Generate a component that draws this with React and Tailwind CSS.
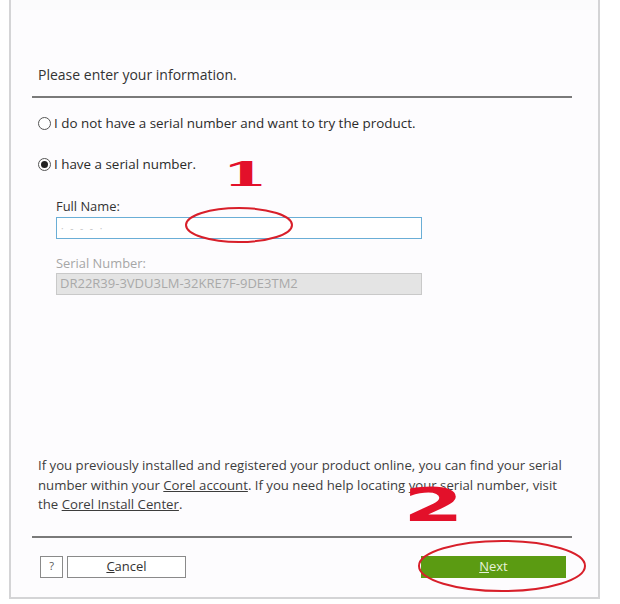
import React from 'react';

const font = { fontFamily: '"Open Sans", "Noto Sans", sans-serif' };

const Radio = ({ checked, label }) => (
  <div className="flex items-center h-[18px]">
    <span className="w-[13px] h-[13px] rounded-full border border-[#555] bg-white flex items-center justify-center">
      {checked && <span className="w-[7px] h-[7px] rounded-full bg-[#222]" />}
    </span>
    <span className="ml-[3px] text-[13.4px] text-[#2b2b2b]">{label}</span>
  </div>
);

const App = () => {
  return (
    <div className="relative w-[620px] h-[604px] bg-white overflow-hidden" style={font}>
      <div className="ml-[9px] w-[591px] h-[599px] border-x-2 border-b-2 border-[#d4d4d6] bg-[#fdfcfe] flex flex-col">
        <div className="h-[10px] bg-[#fbfbfc]" />

        {/* heading */}
        <div className="mt-[56px] ml-[27px] text-[14px] leading-[18px] text-[#333]">
          Please enter your information.
        </div>
        <div className="mt-[12px] ml-[21px] mr-[26px] h-[2px] bg-[#7a7a7a]" />

        {/* options */}
        <div className="ml-[27px] mt-[16px]">
          <Radio label="I do not have a serial number and want to try the product." />
        </div>
        <div className="ml-[27px] mt-[23px]">
          <Radio checked label="I have a serial number." />
        </div>

        {/* fields */}
        <div className="ml-[45px] mt-[25px] flex flex-col">
          <label className="text-[12.9px] leading-[16px] text-[#333]">Full Name:</label>
          <div className="mt-[3px] w-[366px] h-[22px] border border-[#6aaed6] bg-white flex items-center px-[4px]">
            <span className="text-[10px] text-[#c8c8c8] tracking-[2px]">· ‐ - ‐ ·</span>
          </div>
          <label className="mt-[16px] text-[12.9px] leading-[16px] text-[#a6a6a6]">Serial Number:</label>
          <div className="mt-[2px] w-[366px] h-[22px] border border-[#c9c9c9] bg-[#e4e4e4] flex items-center px-[3px]">
            <span className="text-[13px] text-[#a9a9a9]">DR22R39-3VDU3LM-32KRE7F-9DE3TM2</span>
          </div>
        </div>

        {/* help text */}
        <p className="mt-[161px] ml-[27px] w-[530px] text-[13.2px] leading-[19.5px] text-[#3d3d3d]">
          If you previously installed and registered your product online, you can find your serial number within your{' '}
          <span className="underline">Corel account</span>. If you need help locating your serial number, visit the{' '}
          <span className="underline">Corel Install Center</span>.
        </p>

        <div className="mt-[21px] ml-[21px] mr-[26px] h-[2px] bg-[#7a7a7a]" />

        {/* buttons */}
        <div className="mt-[18px] ml-[29px] mr-[32px] flex items-center">
          <button className="w-[23px] h-[22px] border border-[#8a8a8a] bg-white text-[11px] text-[#555] flex items-center justify-center">?</button>
          <button className="ml-[4px] w-[119px] h-[22px] border border-[#8a8a8a] bg-white text-[13px] text-[#333] flex items-center justify-center">
            <span><span className="underline">C</span>ancel</span>
          </button>
          <div className="flex-1" />
          <button className="w-[145px] h-[22px] bg-[#5b9b12] text-[13px] text-[#e6f2d8] flex items-center justify-center">
            <span><span className="underline">N</span>ext</span>
          </button>
        </div>
      </div>

      {/* annotations */}
      <svg className="absolute left-0 top-0 pointer-events-none" width="620" height="604">
        <ellipse cx="239" cy="225" rx="53" ry="17" fill="none" stroke="#d81f2a" strokeWidth="2" />
        <ellipse cx="502" cy="566" rx="83" ry="25" fill="none" stroke="#d81f2a" strokeWidth="2" />
      </svg>
      <span
        className="absolute left-[222px] top-[158px] text-[33px] leading-[33px] font-black text-[#e3102a] scale-x-[2] origin-left"
        style={{ fontFamily: '"DejaVu Serif", serif' }}
      >
        1
      </span>
      <span
        className="absolute left-[403px] top-[482px] text-[46px] leading-[46px] font-black text-[#e3102a] scale-x-[1.9] origin-left"
        style={{ fontFamily: '"DejaVu Sans", sans-serif' }}
      >
        2
      </span>
    </div>
  );
};

export default App;
